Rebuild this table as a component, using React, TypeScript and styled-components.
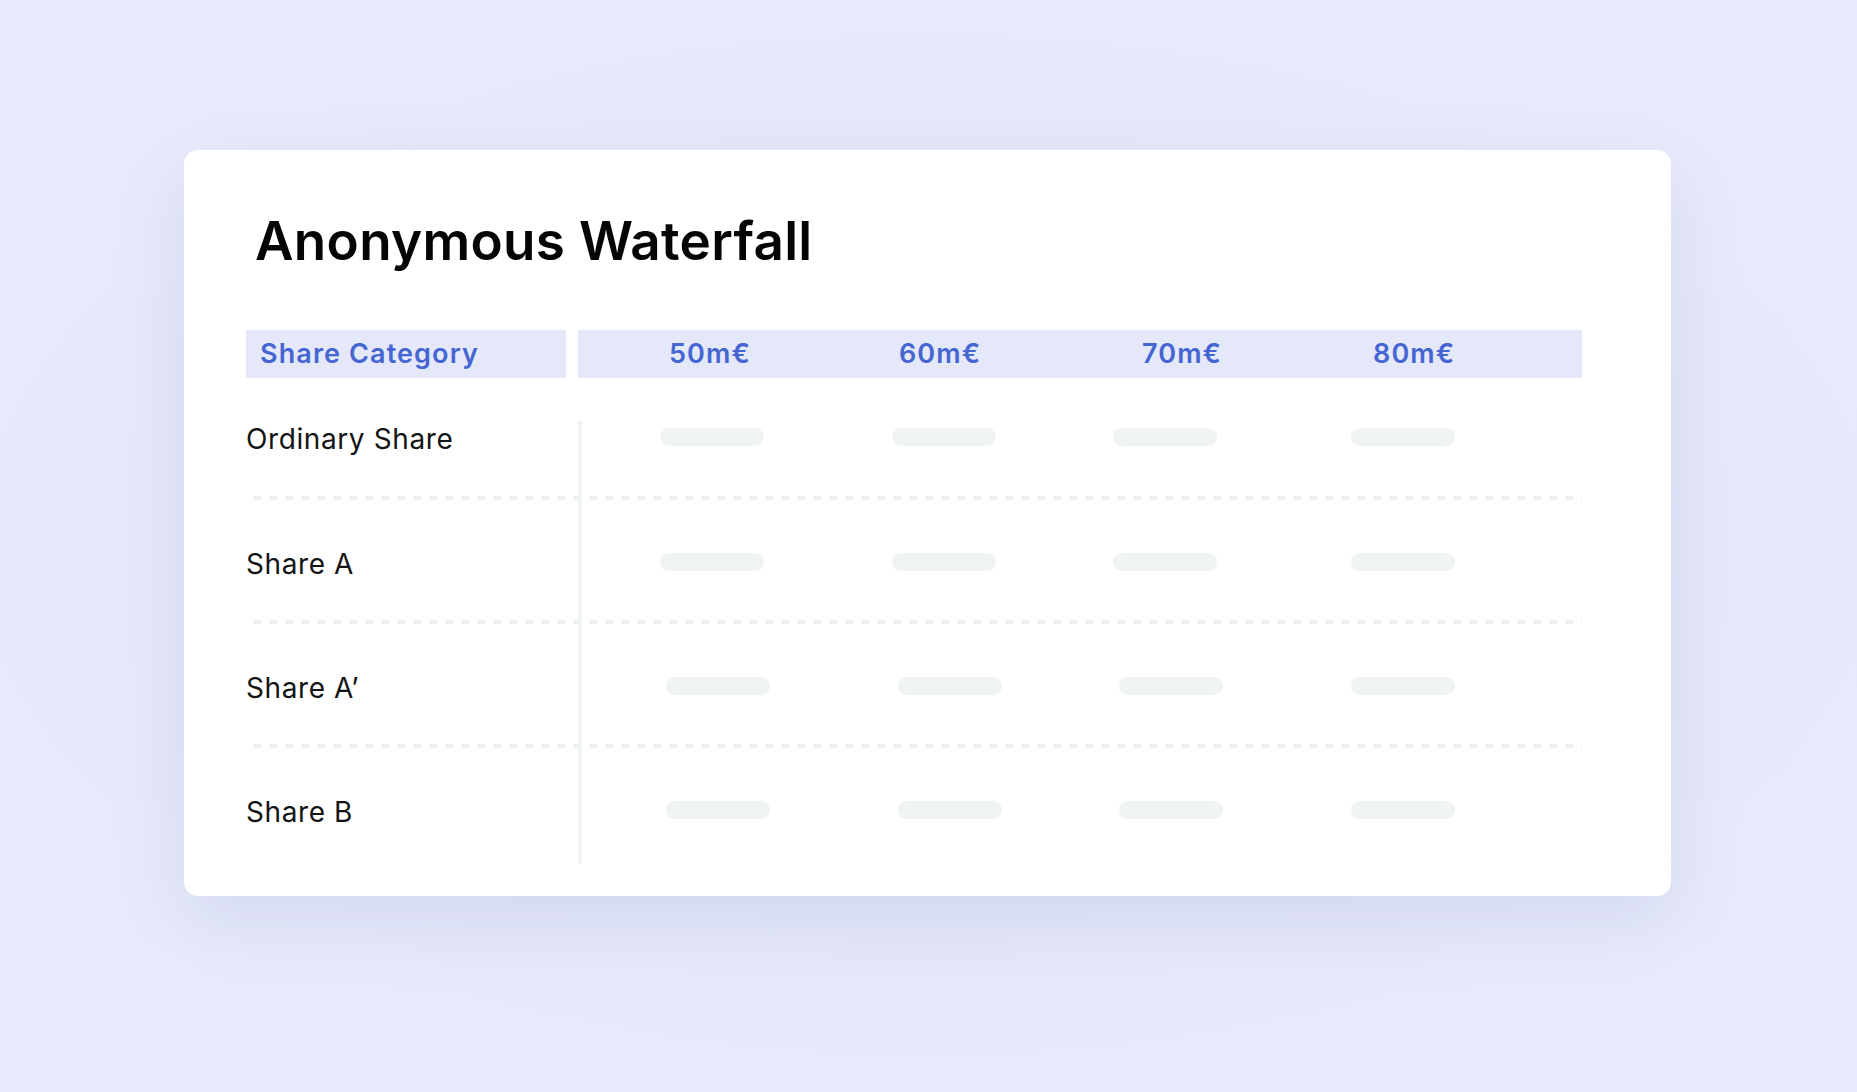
import React from "react";
import styled, { createGlobalStyle } from "styled-components";

const GlobalStyle = createGlobalStyle`
  html, body {
    margin: 0;
    padding: 0;
    background: #e8ebfb;
  }
  body {
    font-family: Inter, "Noto Sans", "Liberation Sans", sans-serif;
    -webkit-font-smoothing: antialiased;
  }
`;

const Page = styled.div`
  min-height: 1092px;
  box-sizing: border-box;
  padding: 150px 0 0 184px;
  background: radial-gradient(ellipse 60% 55% at 50% 50%, #dfe2f3 0%, #e8ebfb 100%);
`;

const Card = styled.section`
  width: 1487px;
  box-sizing: border-box;
  background: #ffffff;
  border-radius: 14px;
  padding: 60px 89px 32px 62px;
  box-shadow: 0 24px 70px rgba(120, 128, 190, 0.16);
`;

const Title = styled.h1`
  margin: 0 0 58px 9px;
  font-size: 53px;
  line-height: 62px;
  font-weight: 600;
  color: #050505;
  letter-spacing: 0.3px;
`;

const HeaderRow = styled.div`
  display: grid;
  grid-template-columns: 320px 1004px;
  column-gap: 12px;
  height: 47px;
`;

const HeaderCell = styled.div<{ $pad?: number }>`
  background: #e4e8f8;
  color: #4565d2;
  font-size: 27px;
  font-weight: 600;
  line-height: 48px;
  padding-left: ${(p) => p.$pad ?? 0}px;
  letter-spacing: 1.1px;
`;

const HeaderValues = styled(HeaderCell)`
  display: grid;
  grid-template-columns: 230px 243px 231px 1fr;
`;

const Body = styled.div`
  margin-top: 44px;
`;

const Row = styled.div<{ $divider: boolean }>`
  display: grid;
  grid-template-columns: 332px 1fr;
  background-image: ${(p) =>
    p.$divider
      ? "repeating-linear-gradient(90deg, #edf2f0 0 8px, transparent 8px 16px)"
      : "none"};
  background-size: calc(100% - 7px) 4px;
  background-position: 7px 100%;
  background-repeat: no-repeat;
`;

const LabelCell = styled.div<{ $top: number; $bottom: number }>`
  padding: ${(p) => p.$top + 1}px 0 ${(p) => p.$bottom - 1}px 0;
  font-size: 28px;
  line-height: 30px;
  font-weight: 400;
  color: #141414;
  letter-spacing: 0.6px;
`;

const ValueCell = styled.div<{ $top: number; $bottom: number }>`
  padding: ${(p) => p.$top}px 0 ${(p) => p.$bottom}px 78px;
  border-left: 4px solid #eff3f2;
  display: grid;
  grid-template-columns: 232px 221px 238px 1fr;
  align-items: center;
`;

const Bar = styled.div<{ $shift: number }>`
  width: 104px;
  height: 18px;
  border-radius: 9px;
  background: #eff4f2;
  margin-left: ${(p) => p.$shift}px;
  margin-bottom: 3px;
`;

const rows = [
  { label: "Ordinary Share", shift: [0, 0, 0, 0] },
  { label: "Share A", shift: [0, 0, 0, 0] },
  { label: "Share A\u2019", shift: [6, 6, 6, 0] },
  { label: "Share B", shift: [6, 6, 6, 0] },
];

const columns = ["50m€", "60m€", "70m€", "80m€"];

export default function App() {
  return (
    <>
      <GlobalStyle />
      <Page>
        <Card>
          <Title>Anonymous Waterfall</Title>
          <HeaderRow>
            <HeaderCell $pad={14}>Share Category</HeaderCell>
            <HeaderValues $pad={91}>
              {columns.map((c) => (
                <span key={c}>{c}</span>
              ))}
            </HeaderValues>
          </HeaderRow>
          <Body>
            {rows.map((r, i) => {
              const first = i === 0;
              const last = i === rows.length - 1;
              const top = first ? 2 : 48;
              const bottom = first ? 47 : last ? 38 : 46;
              return (
                <Row key={r.label} $divider={!last}>
                  <LabelCell $top={top} $bottom={bottom}>
                    {r.label}
                  </LabelCell>
                  <ValueCell $top={top} $bottom={bottom}>
                    {r.shift.map((s, j) => (
                      <Bar key={j} $shift={s} />
                    ))}
                  </ValueCell>
                </Row>
              );
            })}
          </Body>
        </Card>
      </Page>
    </>
  );
}
